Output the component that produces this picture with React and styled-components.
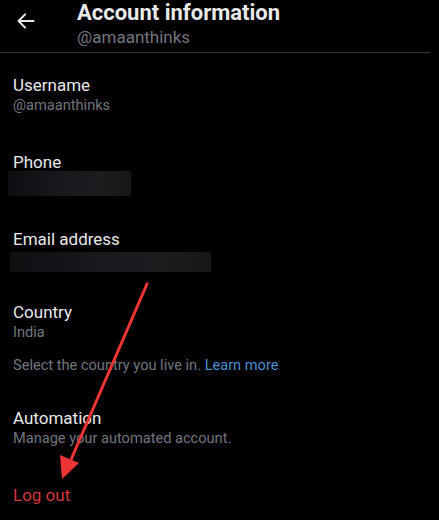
import styled, { createGlobalStyle } from "styled-components"

const Global = createGlobalStyle`
  html, body {
    margin: 0;
    background: #000;
  }
  body {
    font-family: Roboto, "Noto Sans", sans-serif;
    color: #e7e9ea;
  }
`

export default function App() {
  return (
    <St.Page>
      <Global />
      <St.Header>
        <St.Back>
          <svg width="20" height="20" viewBox="0 0 24 24" fill="none" stroke="#e7e9ea" strokeWidth="2.4" strokeLinecap="round" strokeLinejoin="round">
            <path d="M21 12H4" />
            <path d="M11 4l-8 8 8 8" />
          </svg>
        </St.Back>
        <St.TitleWrapper>
          <St.Title>Account information</St.Title>
          <St.Handle>@amaanthinks</St.Handle>
        </St.TitleWrapper>
      </St.Header>

      <St.List>
        <St.Item $top={22}>
          <St.Label>Username</St.Label>
          <St.Value>@amaanthinks</St.Value>
        </St.Item>

        <St.Item $top={37}>
          <St.Label>Phone</St.Label>
          <St.Hidden $width={123} $height={25} $left={-5} $top={-1} />
        </St.Item>

        <St.Item $top={33}>
          <St.Label>Email address</St.Label>
          <St.Hidden $width={201} $height={20} $left={-3} $top={3} />
        </St.Item>

        <St.Item $top={30}>
          <St.Label>Country</St.Label>
          <St.Value>India</St.Value>
          <St.Note>
            Select the country you live in. <St.Link>Learn more</St.Link>
          </St.Note>
        </St.Item>

        <St.Item $top={33}>
          <St.Label>Automation</St.Label>
          <St.Value>Manage your automated account.</St.Value>
        </St.Item>

        <St.Logout>Log out</St.Logout>
      </St.List>

      <St.Annotation width="439" height="520" viewBox="0 0 439 520">
        <line x1="147" y1="284" x2="70" y2="462" stroke="#ee3434" strokeWidth="3" strokeLinecap="round" />
        <polygon points="62,479 60,455 79,463" fill="#ee3434" />
      </St.Annotation>
    </St.Page>
  )
}

const St = {
  Page: styled.div`
    position: relative;
    width: 439px;
    height: 520px;
    overflow: hidden;
    background: #000;
  `,
  Header: styled.div`
    display: flex;
    align-items: flex-start;
    height: 53px;
    margin-right: 9px;
    border-bottom: 1px solid #2f3336;
    box-sizing: border-box;
  `,
  Back: styled.div`
    width: 77px;
    padding: 11px 0 0 16px;
    box-sizing: border-box;
  `,
  TitleWrapper: styled.div`
    display: flex;
    flex-direction: column;
  `,
  Title: styled.div`
    font-size: 22px;
    font-weight: bold;
    line-height: 26px;
  `,
  Handle: styled.div`
    font-size: 17px;
    line-height: 22px;
    color: #71767b;
  `,
  List: styled.div`
    display: flex;
    flex-direction: column;
    padding: 0 13px;
  `,
  Item: styled.div`
    display: flex;
    flex-direction: column;
    margin-top: ${p => p.$top}px;
  `,
  Label: styled.div`
    font-size: 17px;
    line-height: 20px;
    color: #e7e9ea;
  `,
  Value: styled.div`
    font-size: 14.6px;
    line-height: 20px;
    color: #71767b;
  `,
  Hidden: styled.div`
    width: ${p => p.$width}px;
    height: ${p => p.$height}px;
    margin-left: ${p => p.$left}px;
    margin-top: ${p => p.$top}px;
    background: linear-gradient(90deg, #0d0f11 0%, #16181b 40%, #1b1d1f 75%, #141618 100%);
  `,
  Note: styled.div`
    margin-top: 13px;
    font-size: 14.6px;
    line-height: 20px;
    color: #71767b;
  `,
  Link: styled.span`
    color: #4a8fce;
  `,
  Logout: styled.div`
    margin-top: 37px;
    font-size: 17px;
    line-height: 20px;
    color: #d2353e;
  `,
  Annotation: styled.svg`
    position: absolute;
    left: 0;
    top: 0;
    pointer-events: none;
  `,
}
